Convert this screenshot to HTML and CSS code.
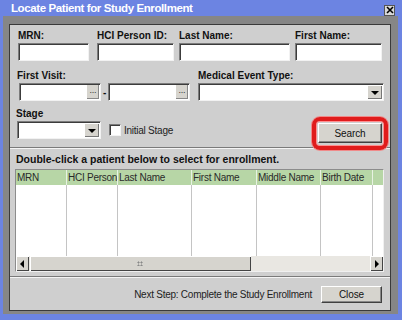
FILE: index.html
```html
<!DOCTYPE html>
<html lang="en">
<head>
    <meta charset="UTF-8">
    <title>Locate Patient for Study Enrollment</title>
    <link rel="stylesheet" href="styles.css">
</head>
<body>
<div class="window">
    <div class="titlebar">
        <span class="title">Locate Patient for Study Enrollment</span>
        <span class="close-box">
            <svg width="8" height="8" viewBox="0 0 8 8"><path d="M1 1L7 7M7 1L1 7" stroke="#000" stroke-width="1.6"/></svg>
        </span>
    </div>

    <div class="frame">
        <div class="panel">

            <!-- criterios de busca -->
            <div class="criteria">
                <div class="row">
                    <div class="field w-mrn"><label>MRN:</label><div class="input"></div></div>
                    <div class="field w-hci"><label>HCI Person ID:</label><div class="input"></div></div>
                    <div class="field w-last"><label>Last Name:</label><div class="input"></div></div>
                    <div class="field w-first"><label>First Name:</label><div class="input"></div></div>
                </div>

                <div class="row row-visit">
                    <div class="field w-visit">
                        <label>First Visit:</label>
                        <div class="dates">
                            <div class="input date"><span class="dots">...</span></div>
                            <span class="dash">-</span>
                            <div class="input date"><span class="dots">...</span></div>
                        </div>
                    </div>
                    <div class="field w-event">
                        <label>Medical Event Type:</label>
                        <div class="input select"><span class="arrow"></span></div>
                    </div>
                </div>

                <div class="row row-stage">
                    <div class="field">
                        <label>Stage</label>
                        <div class="stage-line">
                            <div class="input select w-stage"><span class="arrow"></span></div>
                            <span class="checkbox"></span>
                            <span class="check-label">Initial Stage</span>
                        </div>
                    </div>
                    <button class="btn btn-search">Search</button>
                </div>
            </div>

            <!-- resultados -->
            <div class="results">
                <p class="hint">Double-click a patient below to select for enrollment.</p>
                <div class="grid">
                    <div class="cols head">
                        <span>MRN</span><span>HCI Person</span><span>Last Name</span><span>First Name</span><span>Middle Name</span><span>Birth Date</span><span></span>
                    </div>
                    <div class="cols body">
                        <span></span><span></span><span></span><span></span><span></span><span></span><span></span>
                    </div>
                    <div class="hscroll">
                        <span class="sbtn left"></span>
                        <span class="thumb"><span class="grip"></span></span>
                        <span class="track"></span>
                        <span class="sbtn right"></span>
                    </div>
                </div>
            </div>

            <div class="footer">
                <span class="next">Next Step: Complete the Study Enrollment</span>
                <button class="btn btn-close">Close</button>
            </div>

        </div>
    </div>
</div>
</body>
</html>
```

FILE: styles.css
```css
* {
    margin: 0;
    padding: 0;
    box-sizing: border-box;
}

html, body {
    height: 100%;
    background-color: #6c84e2;
    font-family: "Liberation Sans", Arial, sans-serif;
    font-size: 10px;
    letter-spacing: -0.25px;
    color: #111;
}

.window {
    padding: 0 4px 6px 3px;
}

.titlebar {
    height: 16px;
    display: flex;
    align-items: center;
    justify-content: space-between;
    padding: 0 3px 0 8px;
}

.title {
    color: #fff;
    font-weight: bold;
    font-size: 11.5px;
    letter-spacing: -0.4px;
}

.close-box {
    width: 11px;
    height: 11px;
    margin-top: 4px;
    background-color: #d8d8d8;
    border: 1px solid #555;
    display: flex;
    align-items: center;
    justify-content: center;
}

.frame {
    background-color: #868686;
    padding: 8px 7px 3px 6px;
}

.panel {
    height: 287px;
    background-color: #cfcfcf;
    border: 1px solid #3a3a3a;
    display: flex;
    flex-direction: column;
}

/* criterios */
.criteria {
    height: 122px;
    padding: 4px 0 0 7px;
}

.row {
    display: flex;
}

.field label {
    display: block;
    font-weight: bold;
    letter-spacing: 0;
    line-height: 13px;
    height: 14px;
}

.input {
    height: 18px;
    background-color: #fff;
    border-top: 1px solid #7c7c7c;
    border-left: 1px solid #7c7c7c;
    border-right: 1px solid #f2f2f2;
    border-bottom: 1px solid #f2f2f2;
    box-shadow: inset 1px 1px 0 #3c3c3c;
    position: relative;
}

.w-mrn { width: 71px; margin-left: 1px; margin-right: 8px; }
.w-hci { width: 77px; margin-right: 5px; }
.w-last { width: 111px; margin-right: 5px; }
.w-first { width: 87px; }

.row-visit {
    margin-top: 8px;
}

.w-visit {
    width: 171px;
    margin-left: 2px;
}

.w-visit label {
    margin-left: -2px;
}

.dates {
    display: flex;
    align-items: center;
}

.date {
    width: 82px;
}

.dash {
    width: 7px;
    text-align: center;
    font-weight: bold;
}

.dots {
    position: absolute;
    right: 1px;
    top: 1px;
    bottom: 1px;
    width: 13px;
    background-color: #d6d4ce;
    border-left: 1px solid #fff;
    box-shadow: inset -1px -1px 0 #888;
    font-size: 9px;
    line-height: 10px;
    text-align: center;
    color: #333;
}

.w-event {
    width: 186px;
    margin-left: 8px;
}

.arrow {
    position: absolute;
    right: 1px;
    top: 1px;
    bottom: 1px;
    width: 15px;
    background-color: #d6d4ce;
    border-top: 1px solid #fff;
    border-left: 1px solid #fff;
    box-shadow: inset -1px -1px 0 #777;
}

.arrow::after {
    content: "";
    position: absolute;
    left: 3px;
    top: 5px;
    border-left: 4px solid transparent;
    border-right: 4px solid transparent;
    border-top: 4px solid #000;
}

.row-stage {
    margin-top: 6px;
    justify-content: space-between;
    align-items: flex-start;
    padding-right: 8px;
}

.row-stage label {
    margin-left: -1px;
}

.stage-line {
    display: flex;
    align-items: center;
}

.w-stage {
    width: 84px;
}

.checkbox {
    width: 12px;
    height: 12px;
    margin: 0 3px 0 8px;
    background-color: #fff;
    border-top: 1px solid #7c7c7c;
    border-left: 1px solid #7c7c7c;
    border-right: 1px solid #f2f2f2;
    border-bottom: 1px solid #f2f2f2;
    box-shadow: inset 1px 1px 0 #3c3c3c;
}

.check-label {
    color: #222;
}

.btn {
    font-family: "Liberation Sans", Arial, sans-serif;
    font-size: 10px;
    letter-spacing: -0.1px;
    color: #111;
    background-color: #d6d4ce;
    border: 1px solid;
    border-color: #fff #404040 #404040 #fff;
    box-shadow: inset -1px -1px 0 #888;
}

.btn-search {
    width: 64px;
    height: 20px;
    margin-top: 16px;
    position: relative;
}

/* destaque vermelho em volta do botao */
.btn-search::before {
    content: "";
    position: absolute;
    left: -7px;
    top: -7px;
    right: -7px;
    bottom: -8px;
    border: 4px solid #e01c1c;
    border-radius: 8px;
    box-shadow: 0 0 0 1px #f08a8a, inset 0 0 0 1px #ff9090;
}

/* resultados */
.results {
    height: 130px;
    border-top: 1px solid #7a7a7a;
    box-shadow: inset 0 1px 0 #f4f4f4;
    border-bottom: 1px solid #7a7a7a;
    padding: 5px 0 0 5px;
}

.hint {
    font-weight: bold;
    font-size: 10.5px;
    letter-spacing: 0;
    line-height: 13px;
    margin-left: 1px;
}

.grid {
    width: 369px;
    height: 103px;
    margin-top: 3px;
    border: 1px solid;
    border-color: #8c8c8c #f0f0f0 #f0f0f0 #8c8c8c;
    background-color: #fff;
}

.cols {
    display: grid;
    grid-template-columns: 51px 51px 74px 65px 64px 52px 10px;
}

.cols span {
    border-right: 1px solid #c4c4c4;
}

.head {
    height: 15px;
    background-color: #b7d6a6;
}

.head span {
    border-right: 1px solid #e8f2e2;
    line-height: 15px;
    padding-left: 1px;
    color: #2a2a2a;
    white-space: nowrap;
    overflow: hidden;
}

.head span:last-child {
    border-right: 0;
}

.body {
    height: 71px;
}

.body span:last-child {
    border-right: 0;
}

.hscroll {
    height: 15px;
    display: flex;
    background-color: #e9e7e2;
}

.sbtn, .thumb {
    background-color: #d6d4ce;
    border-top: 1px solid #fff;
    border-left: 1px solid #fff;
    box-shadow: inset -1px -1px 0 #444;
    position: relative;
}

.sbtn {
    width: 13px;
}

.thumb {
    width: 221px;
    margin-left: 1px;
}

.track {
    flex: 1;
}

.sbtn::after {
    content: "";
    position: absolute;
    top: 3px;
    border-top: 4px solid transparent;
    border-bottom: 4px solid transparent;
}

.sbtn.left::after {
    left: 3px;
    border-right: 4px solid #000;
}

.sbtn.right::after {
    left: 4px;
    border-left: 4px solid #000;
}

.grip {
    position: absolute;
    left: 106px;
    top: 4px;
    width: 6px;
    height: 5px;
    background-image: radial-gradient(#888 45%, transparent 50%);
    background-size: 3px 3px;
}

/* rodape */
.footer {
    flex: 1;
    border-top: 1px solid #f4f4f4;
    display: flex;
    align-items: center;
    justify-content: flex-end;
    padding-right: 8px;
}

.next {
    color: #222;
    margin-right: 9px;
}

.btn-close {
    width: 61px;
    height: 17px;
}
```
